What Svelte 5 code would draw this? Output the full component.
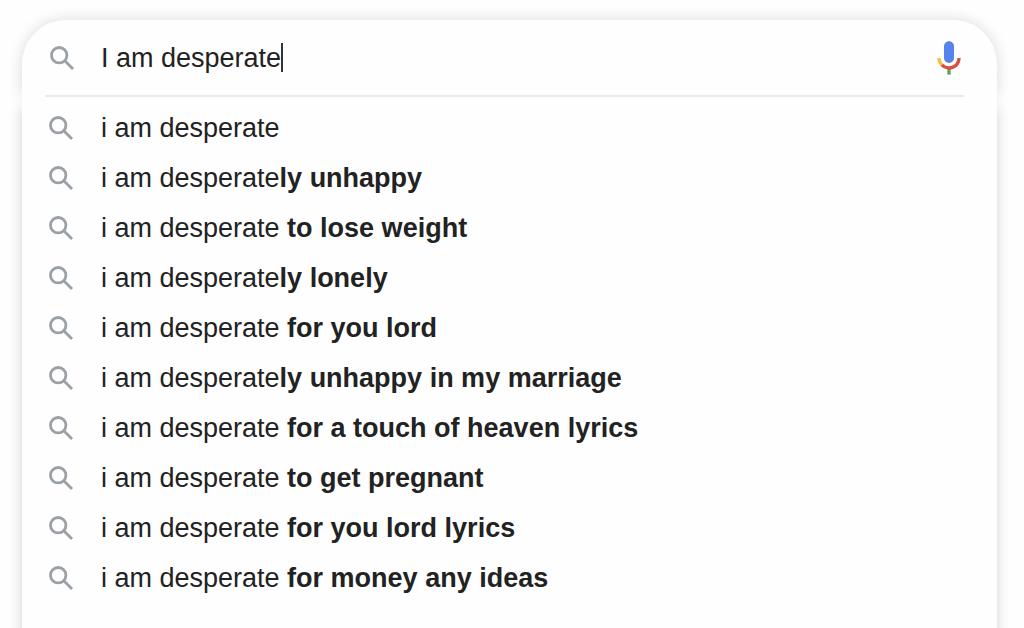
<script>
  let query = $state('I am desperate');

  const typed = 'i am desperate';
  const endings = [
    '',
    'ly unhappy',
    ' to lose weight',
    'ly lonely',
    ' for you lord',
    'ly unhappy in my marriage',
    ' for a touch of heaven lyrics',
    ' to get pregnant',
    ' for you lord lyrics',
    ' for money any ideas'
  ];
</script>

{#snippet magnifier()}
  <svg class="magnifier" viewBox="0 0 24 24" aria-hidden="true">
    <circle cx="9.2" cy="9.2" r="7.7" />
    <path d="M14.8 14.8 23 23" />
  </svg>
{/snippet}

<main>
  <form class="bar" role="search" onsubmit={(e) => e.preventDefault()}>
    {@render magnifier()}
    <div class="field">
      <input type="text" aria-label="Search" autocomplete="off" bind:value={query} />
      <span class="caret"></span>
    </div>
    <button class="voice" type="button" aria-label="Search by voice">
      <svg viewBox="0 0 24 24" aria-hidden="true">
        <path fill="#5684ec" d="m12 15c1.66 0 3-1.31 3-2.97v-7.02c0-1.66-1.34-3.01-3-3.01s-3 1.34-3 3.01v7.02c0 1.66 1.34 2.97 3 2.97z" />
        <path fill="#58a55c" d="m11 18.08h2v3.92h-2z" />
        <path fill="#f1bf42" d="m7.05 16.87c-1.27-1.33-2.05-2.83-2.05-4.87h2c0 1.45.56 2.42 1.47 3.38v.32l-1.15 1.18z" />
        <path fill="#d95040" d="m12 16.93a4.97 5.25 0 0 1-3.54-1.55l-1.41 1.49c1.26 1.34 3.02 2.13 4.95 2.13 3.87 0 6.99-2.92 6.99-7h-1.99c0 2.92-2.24 4.93-5 4.93z" />
      </svg>
    </button>
  </form>

  <div class="panel">
    <hr />
    <ul>
      {#each endings as ending}
        <li>
          <button class="suggestion" type="button" onclick={() => (query = typed + ending)}>
            {@render magnifier()}
            <span class="phrase">{typed}<b>{ending}</b></span>
          </button>
        </li>
      {/each}
    </ul>
  </div>
</main>

<style>
  :global(body) {
    margin: 0;
    background: #fefefe;
    overflow: hidden;
  }

  main {
    display: flex;
    flex-direction: column;
    min-height: 100vh;
    box-sizing: border-box;
    padding: 20px 27px 0 22px;
    color: #222;
    font: 27px/32px "Liberation Sans", Arial, sans-serif;
  }

  .bar {
    display: flex;
    align-items: center;
    gap: 27px;
    height: 75px;
    padding: 0 28px;
    border-radius: 44px 44px 0 0;
    background: #fefefe;
    box-shadow: 0 0 14px rgba(32, 33, 36, 0.16);
  }

  .magnifier {
    flex: none;
    width: 24px;
    height: 24px;
    fill: none;
    stroke: #9aa0a6;
    stroke-width: 2.8;
  }

  .field {
    display: flex;
    flex: 1;
    align-items: center;
    min-width: 0;
  }

  input {
    field-sizing: content;
    min-width: 0;
    padding: 0;
    border: 0;
    outline: 0;
    background: none;
    color: inherit;
    font: inherit;
    caret-color: transparent;
  }

  .caret {
    width: 2px;
    height: 29px;
    background: #333;
  }

  button {
    padding: 0;
    border: 0;
    background: none;
    color: inherit;
    font: inherit;
    cursor: pointer;
  }

  .voice {
    flex: none;
    width: 40px;
    height: 40px;
  }

  .voice svg {
    display: block;
  }

  .panel {
    flex: 1;
    background: #fefefe;
    box-shadow: 0 12px 12px rgba(32, 33, 36, 0.2);
  }

  hr {
    height: 2px;
    margin: 0 33px 0 23px;
    border: 0;
    background: #e8eaed;
  }

  ul {
    margin: 0;
    padding: 6px 0 24px;
    list-style: none;
  }

  .suggestion {
    display: flex;
    align-items: center;
    gap: 28px;
    width: 100%;
    height: 50px;
    padding: 0 27px;
    text-align: left;
  }

  .phrase {
    white-space: pre;
  }
</style>
